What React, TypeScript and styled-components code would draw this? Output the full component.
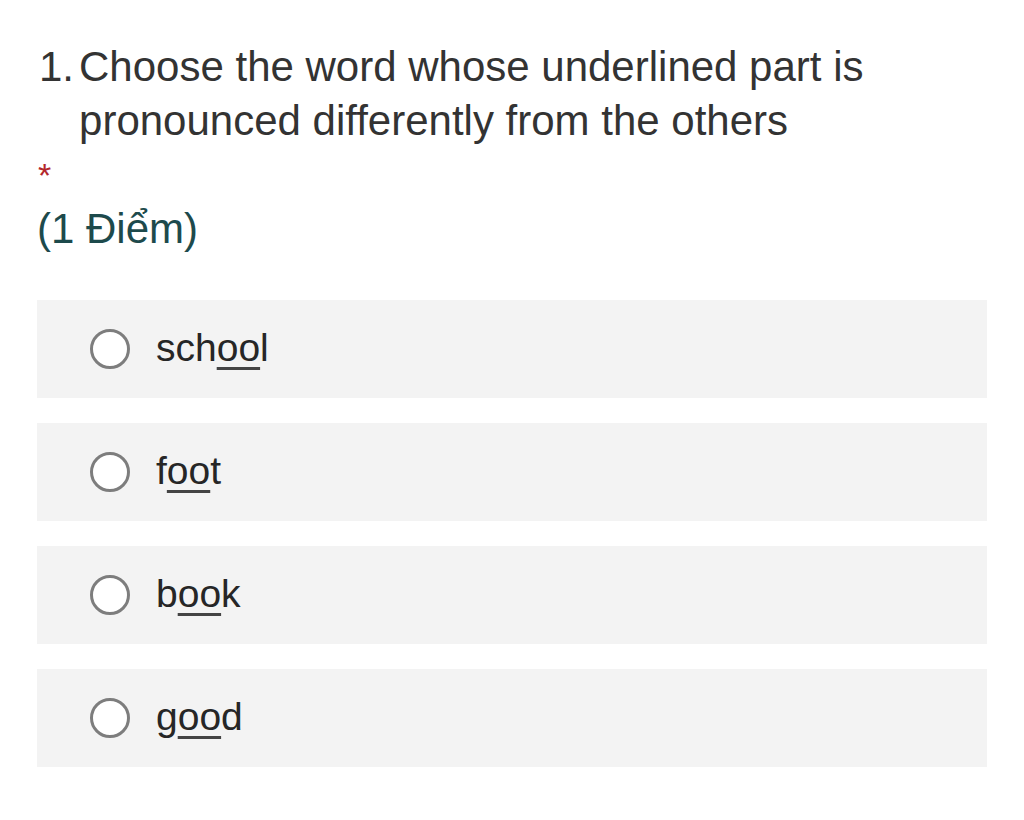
import React from "react";
import styled, { createGlobalStyle } from "styled-components";

const GlobalStyle = createGlobalStyle`
	body {
		margin: 0;
		background: #ffffff;
		font-family: "Liberation Sans", Arial, sans-serif;
	}
`;

const options = [
	{ key: "school", before: "sch", under: "oo", after: "l" },
	{ key: "foot", before: "f", under: "oo", after: "t" },
	{ key: "book", before: "b", under: "oo", after: "k" },
	{ key: "good", before: "g", under: "oo", after: "d" },
];

export default function App() {
	return (
		<Page>
			<GlobalStyle />
			<Question>
				<Number>1.</Number>
				<Title>Choose the word whose underlined part is pronounced differently from the others</Title>
			</Question>
			<Required>*</Required>
			<Points>(1 Điểm)</Points>
			<Options>
				{options.map((o) => (
					<Option key={o.key}>
						<Radio />
						<Label>
							{o.before}
							<Under>{o.under}</Under>
							{o.after}
						</Label>
					</Option>
				))}
			</Options>
		</Page>
	);
}

const Page = styled.div`
	width: 1024px;
	height: 820px;
	box-sizing: border-box;
	padding: 40px 37px 0 37px;
	color: #333333;
`;

const Question = styled.div`
	display: flex;
	align-items: flex-start;
	gap: 5px;
	font-size: 42px;
	line-height: 54px;
	padding-left: 2px;
`;

const Number = styled.div`
	flex: none;
`;

const Title = styled.div`
	width: 860px;
`;

const Required = styled.div`
	color: #b3262b;
	font-size: 34px;
	line-height: 30px;
	margin-top: 12px;
	padding-left: 1px;
`;

const Points = styled.div`
	color: #1d4a4c;
	font-size: 42px;
	line-height: 50px;
	margin-top: 14px;
`;

const Options = styled.div`
	display: flex;
	flex-direction: column;
	gap: 25px;
	margin-top: 46px;
	width: 950px;
`;

const Option = styled.div`
	display: flex;
	align-items: center;
	gap: 26px;
	height: 98px;
	box-sizing: border-box;
	padding-left: 53px;
	background: #f3f3f3;
`;

const Radio = styled.div`
	width: 40px;
	height: 40px;
	box-sizing: border-box;
	border: 3px solid #7d7d7d;
	border-radius: 50%;
	background: #ffffff;
`;

const Label = styled.div`
	font-size: 39px;
	color: #262626;
	margin-top: -2px;
`;

const Under = styled.span`
	text-decoration: underline;
	text-decoration-thickness: 3px;
	text-underline-offset: 6px;
	text-decoration-color: #444444;
`;
